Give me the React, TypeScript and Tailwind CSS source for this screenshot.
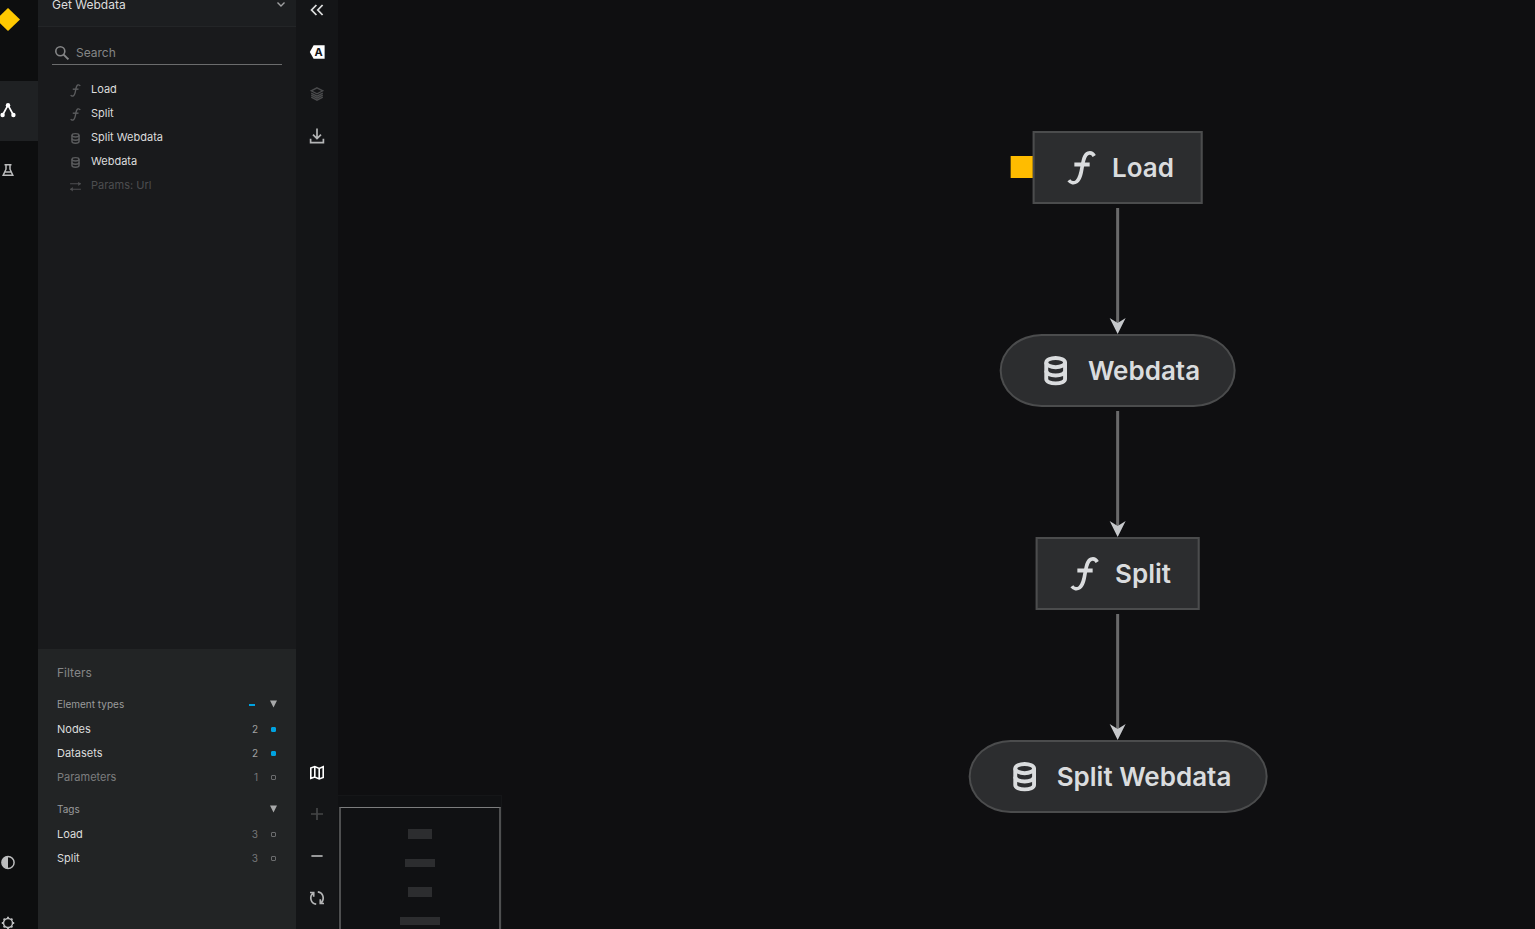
import React from "react";

type IconProps = { className?: string };

const FunctionIcon = ({ className }: IconProps) => (
  <svg viewBox="0 0 40 40" fill="none" stroke="currentColor" className={className} aria-hidden="true">
    <path d="M32.6 8C31 5.200 28.600 4.400 26.400 5.200C22.600 6.600 21.600 12.600 20.700 17.600C19.600 24.600 18.600 31 15 33.600C12.400 35.400 9.200 35 7.200 32.200" strokeWidth="3.6" />
    <path d="M12.700 16.500H28" strokeWidth="3.8" />
  </svg>
);

const DatabaseIcon = ({ className }: IconProps) => (
  <svg viewBox="0 0 40 40" fill="none" stroke="currentColor" strokeWidth="3.9" className={className} aria-hidden="true">
    <ellipse cx="20" cy="11.600" rx="9.400" ry="4.600" />
    <path d="M10.600 11.600V28C10.600 30.600 14.800 32.400 20 32.400S29.400 30.600 29.400 28V11.600" />
    <path d="M10.600 19.800C10.600 22.600 14.800 24.500 20 24.500S29.400 22.600 29.400 19.800" />
  </svg>
);

const ParamsIcon = ({ className }: IconProps) => (
  <svg viewBox="0 0 12 12" fill="none" stroke="currentColor" className={className} aria-hidden="true">
    <path d="M1 3.5H11M1 8.5H11" />
    <path d="M8.5 1.5V5.5L11 3.5ZM3.5 6.5V10.5L1 8.5Z" fill="currentColor" stroke="none" />
  </svg>
);

const GraphIcon = () => (
  <svg viewBox="0 0 16 16" className="size-4" fill="currentColor" aria-hidden="true">
    <path d="M8 2.200L2.600 12M8 2.200L13.400 12" stroke="currentColor" strokeWidth="1.700" />
    <circle cx="8" cy="2.300" r="2.200" />
    <circle cx="2.600" cy="12" r="2.200" />
    <circle cx="13.400" cy="12" r="2.200" />
  </svg>
);

const FlaskIcon = () => (
  <svg viewBox="0 0 16 16" className="size-4" fill="none" stroke="currentColor" strokeWidth="1.5" aria-hidden="true">
    <path d="M4.500 1.700H11.500M6 1.700V6.200L3.200 12.300H12.800L10 6.200V1.700M5 9H11" />
  </svg>
);

const ContrastIcon = () => (
  <svg viewBox="0 0 16 16" className="size-4" aria-hidden="true">
    <circle cx="8" cy="7.500" r="6.100" fill="none" stroke="currentColor" strokeWidth="1.500" />
    <path d="M8 1.500A6 6 0 0 0 8 13.500Z" fill="currentColor" />
  </svg>
);

const GearIcon = () => (
  <svg viewBox="0 0 16 16" className="size-4" fill="none" stroke="currentColor" aria-hidden="true">
    <circle cx="8" cy="8" r="4.5" strokeWidth="1.5" />
    <path d="M8 1.8V3.4M8 12.6V14.2M1.8 8H3.4M12.6 8H14.2M3.6 3.6L4.8 4.8M11.2 11.2L12.4 12.4M12.4 3.6L11.2 4.8M4.8 11.2L3.6 12.4" strokeWidth="1.9" />
  </svg>
);

const CollapseIcon = () => (
  <svg viewBox="0 0 20 20" className="size-5" fill="none" stroke="currentColor" strokeWidth="1.8" aria-hidden="true">
    <path d="M9.4 5L4.6 10L9.4 15M15.6 5L10.8 10L15.6 15" />
  </svg>
);

const LabelIcon = () => (
  <svg viewBox="0 0 20 20" className="size-5" aria-hidden="true">
    <path d="M2.8 10L6.6 3.2H17.6V16.800H6.6Z" fill="currentColor" />
    <text x="11.500" y="14" textAnchor="middle" className="fill-[#141517] font-['Inter'] text-[11px] font-bold">A</text>
  </svg>
);

const LayersIcon = () => (
  <svg viewBox="0 0 20 20" className="size-5" fill="none" stroke="currentColor" strokeWidth="1.3" aria-hidden="true">
    <path d="M10 3.800L15.800 6.800L10 9.800L4.200 6.800Z" />
    <path d="M4.200 9.200L10 12.200L15.800 9.200M4.200 11.200L10 14.200L15.800 11.200M4.200 13.200L10 16.200L15.800 13.200" />
  </svg>
);

const DownloadIcon = () => (
  <svg viewBox="0 0 20 20" className="size-5" fill="none" stroke="currentColor" strokeWidth="1.7" aria-hidden="true">
    <path d="M10 2.6V12M6 8.6L10 12.6L14 8.6M3.6 12.8V16.6H16.4V12.8" />
  </svg>
);

const MapIcon = () => (
  <svg viewBox="0 0 20 20" className="size-5" fill="none" stroke="currentColor" strokeWidth="1.6" aria-hidden="true">
    <path d="M3.800 6L7.800 4.600L12.200 6.400L16.200 4.800V15.400L12.200 16.900L7.800 15.100L3.800 16.300ZM7.800 4.600V15.100M12.200 6.400V16.900" />
  </svg>
);

const PlusIcon = () => (
  <svg viewBox="0 0 20 20" className="size-5" stroke="currentColor" strokeWidth="1.7" aria-hidden="true">
    <path d="M10 4V16M4 10H16" />
  </svg>
);

const MinusIcon = () => (
  <svg viewBox="0 0 20 20" className="size-5" stroke="currentColor" strokeWidth="1.8" aria-hidden="true">
    <path d="M4.4 10H15.6" />
  </svg>
);

const ResetIcon = () => (
  <svg viewBox="0 0 20 20" className="size-5" fill="none" stroke="currentColor" strokeWidth="1.7" aria-hidden="true">
    <path d="M9.200 16.200C3.800 15.600 2 9 6 5M3 4.500H6.700V8.800M10.800 3.800C16.200 4.400 18 11 14 15M17 15.500H13.300V11.200" />
  </svg>
);

const ToolButton = ({ label, tone, children }: { label: string; tone: string; children: React.ReactNode }) => (
  <button type="button" aria-label={label} className={`flex h-[42px] w-full shrink-0 items-center justify-center ${tone}`}>
    {children}
  </button>
);

const elements = [
  { name: "Load", Icon: FunctionIcon, enabled: true },
  { name: "Split", Icon: FunctionIcon, enabled: true },
  { name: "Split Webdata", Icon: DatabaseIcon, enabled: true },
  { name: "Webdata", Icon: DatabaseIcon, enabled: true },
  { name: "Params: Url", Icon: ParamsIcon, enabled: false },
];

const FilterRow = ({ name, count, checked, muted }: { name: string; count: number; checked?: boolean; muted?: boolean }) => (
  <li>
    <label className="flex h-6 items-center">
      <span className={`flex-1 ${muted ? "text-[#7d7e7f]" : "text-[#dcdddd]"}`}>{name}</span>
      <span className={`text-[10px] ${checked ? "text-[#a0a1a2]" : "text-[#76777a]"}`}>{count}</span>
      <input
        type="checkbox"
        defaultChecked={checked}
        className="mt-px mr-1 ml-[13px] size-[5px] appearance-none rounded-[1px] border border-[#6b6c6e] checked:border-[#00a2e0] checked:bg-[#00a2e0]"
      />
    </label>
  </li>
);

const GroupHeader = ({ name, partial }: { name: string; partial?: boolean }) => (
  <div className="mb-px flex h-6 items-center text-[10px] text-[#9a9b9c]">
    <h3 className="flex-1">{name}</h3>
    {partial && <span className="mt-px mr-[15px] h-0.5 w-1.5 bg-[#00a2e0]" />}
    <button type="button" aria-label={`Toggle ${name}`} className="mr-[3px] text-[#a8a9aa]">
      <svg viewBox="0 0 7 8" className="h-2 w-[7px]" fill="currentColor" aria-hidden="true">
        <path d="M0 0.5H7L3.5 7.5Z" />
      </svg>
    </button>
  </div>
);

const TaskNode = ({ name, flagged }: { name: string; flagged?: boolean }) => (
  <div className="relative flex h-[73px] items-center gap-2.5 border-2 border-[#4b4c4d] bg-[#2c2d2f] pr-[27px] pl-[27px]">
    {flagged && <span className="absolute top-[23px] right-full mr-0.5 size-[22px] bg-[#ffbc00]" />}
    <FunctionIcon className="size-10" />
    <span>{name}</span>
  </div>
);

const DataNode = ({ name }: { name: string }) => (
  <div className="flex h-[73px] items-center gap-3 rounded-[42px/50%] border-2 border-[#4b4c4d] bg-[#2c2d2f] pr-[34px] pl-[34px]">
    <DatabaseIcon className="size-10" />
    <span>{name}</span>
  </div>
);

const Edge = () => (
  <svg viewBox="0 0 20 130" className="h-[130px] w-5" aria-hidden="true">
    <path d="M10 4V123" stroke="#6a6a6b" strokeWidth="3" />
    <path d="M2 114L10 119L18 114L10 130Z" fill="#c6c8cb" />
  </svg>
);

export default function App() {
  return (
    <div className="flex h-screen overflow-hidden bg-[#0f0f11] font-['Inter',sans-serif] text-[11px] text-[#dcdddd]">
      <nav aria-label="Main" className="flex w-[38px] shrink-0 flex-col bg-[#0d0e0f] text-[#bcbdbe]">
        <a href="#home" aria-label="Home" className="block h-[81px] pt-2">
          <svg viewBox="0 0 20 24" className="h-6 w-5" aria-hidden="true">
            <path d="M8 0L20 11.5L8 23L-4 11.5Z" fill="#ffc900" />
          </svg>
        </a>
        <button type="button" aria-label="Flowchart" className="flex h-15 items-center bg-[#1f2123] text-white">
          <GraphIcon />
        </button>
        <button type="button" aria-label="Experiments" className="flex h-15 items-center">
          <FlaskIcon />
        </button>
        <div className="mt-auto flex h-24 flex-col overflow-hidden">
          <button type="button" aria-label="Toggle theme" className="flex h-15 shrink-0 items-center">
            <ContrastIcon />
          </button>
          <button type="button" aria-label="Settings" className="flex h-15 shrink-0 items-center">
            <GearIcon />
          </button>
        </div>
      </nav>

      <aside className="flex w-[258px] shrink-0 flex-col bg-[#191a1c]">
        <div className="relative -mt-[17px] h-11 shrink-0 border-b border-[#232527] bg-[#1c1e20]">
          <select aria-label="Pipeline" className="h-full w-full appearance-none bg-transparent pr-8 pl-3.5 text-[12px] text-[#dcdddd]">
            <option>Get Webdata</option>
          </select>
          <svg viewBox="0 0 10 10" className="pointer-events-none absolute top-4 right-[10px] size-2.5" fill="none" stroke="#a0a1a2" strokeWidth="1.4" aria-hidden="true">
            <path d="M1.500 3.500L5 7L8.500 3.500" />
          </svg>
        </div>
        <label className="mx-3.5 mt-3.5 flex h-6 shrink-0 items-center gap-1.5 border-b border-[#6b6c6d]">
          <svg viewBox="0 0 16 16" className="ml-0.5 size-4" fill="none" stroke="#858687" strokeWidth="1.600" aria-hidden="true">
            <circle cx="6.300" cy="6.300" r="4.500" />
            <path d="M9.600 9.600L14.400 14.400" strokeWidth="2" />
          </svg>
          <input type="search" aria-label="Search" placeholder="Search" className="min-w-0 flex-1 bg-transparent text-[12px] outline-none placeholder:text-[#858687]" />
        </label>
        <ul className="mt-3 min-h-0 flex-1">
          {elements.map(({ name, Icon, enabled }) => (
            <li key={name}>
              <button type="button" className={`flex h-6 w-full items-center gap-2 pl-[30px] ${enabled ? "text-[#dcdddd]" : "text-[#4d4e50]"}`}>
                <Icon className={enabled ? "mt-0.5 size-[15px] text-[#5b5c5e]" : "mt-0.5 size-[15px] p-px text-[#4d4e50]"} />
                <span>{name}</span>
              </button>
            </li>
          ))}
        </ul>
        <section className="h-70 shrink-0 bg-[#222425] pt-[15px] pr-4 pl-[19px]">
          <h2 className="mb-2.5 h-[18px] text-[12px] leading-[18px] text-[#858687]">Filters</h2>
          <GroupHeader name="Element types" partial />
          <ul>
            <FilterRow name="Nodes" count={2} checked />
            <FilterRow name="Datasets" count={2} checked />
            <FilterRow name="Parameters" count={1} muted />
          </ul>
          <div className="mt-2">
            <GroupHeader name="Tags" />
            <ul>
              <FilterRow name="Load" count={3} />
              <FilterRow name="Split" count={3} />
            </ul>
          </div>
        </section>
      </aside>

      <div role="toolbar" aria-label="Canvas tools" className="flex w-[42px] shrink-0 flex-col bg-[#141517] pb-2.5">
        <button type="button" aria-label="Hide menu" className="flex h-[31px] justify-center text-[#dcdddd]">
          <CollapseIcon />
        </button>
        <ToolButton label="Hide text labels" tone="text-white"><LabelIcon /></ToolButton>
        <ToolButton label="Layers" tone="text-[#4a4b4d]"><LayersIcon /></ToolButton>
        <ToolButton label="Export" tone="text-[#b4b5b6]"><DownloadIcon /></ToolButton>
        <div className="mt-auto">
          <ToolButton label="Hide minimap" tone="text-white"><MapIcon /></ToolButton>
          <ToolButton label="Zoom in" tone="text-[#444547]"><PlusIcon /></ToolButton>
          <ToolButton label="Zoom out" tone="text-[#a8a9aa]"><MinusIcon /></ToolButton>
          <ToolButton label="Reset zoom" tone="text-[#b4b5b6]"><ResetIcon /></ToolButton>
        </div>
      </div>

      <main className="relative min-w-0 flex-1 overflow-hidden">
        <div className="absolute top-[131px] left-[780px] flex -translate-x-1/2 flex-col items-center text-[26px] font-semibold whitespace-nowrap text-[#dadcde]">
          <TaskNode name="Load" flagged />
          <Edge />
          <DataNode name="Webdata" />
          <Edge />
          <TaskNode name="Split" />
          <Edge />
          <DataNode name="Split Webdata" />
        </div>
        <div className="absolute bottom-0 left-0 h-[134px] w-[164px] overflow-hidden border-t border-r border-[#151618] bg-[#101113] pt-[11px] pl-px">
          <div className="flex h-36 w-[162px] flex-col items-center gap-5 border-x-2 border-t border-x-[#4e4f50] border-t-[#7c7d7e] pt-[21px]">
            <span className="h-2.5 w-6 bg-[#2c2d2f]" />
            <span className="h-2 w-[30px] bg-[#2c2d2f]" />
            <span className="h-2.5 w-6 bg-[#2c2d2f]" />
            <span className="h-2 w-10 bg-[#2c2d2f]" />
          </div>
        </div>
      </main>
    </div>
  );
}
